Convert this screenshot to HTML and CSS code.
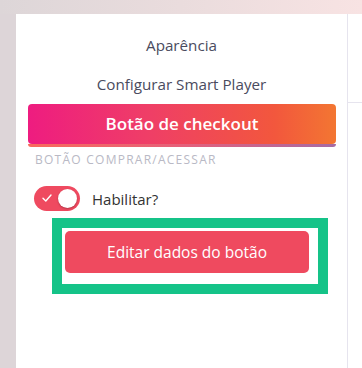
FILE: index.html
```html
<!DOCTYPE html>
<html lang="pt">
<head>
<meta charset="utf-8">
<link rel="stylesheet" href="styles.css">
</head>
<body>
<div class="top"></div>
<div class="main">
  <div class="side"></div>
  <div class="panel">
    <div class="menu-item">Aparência</div>
    <div class="menu-item">Configurar Smart Player</div>
    <div class="checkout">Botão de checkout</div>
    <div class="section-label">BOTÃO COMPRAR/ACESSAR</div>
    <div class="toggle-row">
      <div class="toggle">
        <svg class="check" width="10" height="8" viewBox="0 0 10 8"><path d="M1 4.2 L3.8 7 L9 1" fill="none" stroke="#fff" stroke-width="1.4" stroke-linecap="round" stroke-linejoin="round"/></svg>
        <span class="knob"></span>
      </div>
      <span class="toggle-label">Habilitar?</span>
    </div>
    <div class="highlight">
      <div class="edit-btn">Editar dados do botão</div>
    </div>
  </div>
  <div class="rest">
    <div class="rest-top"></div>
  </div>
</div>
</body>
</html>
```

FILE: styles.css
```css
html, body {
  margin: 0;
  padding: 0;
  height: 100%;
  background: #fff;
  font-family: "Open Sans", "Noto Sans", sans-serif;
}
.top {
  height: 14px;
  background: linear-gradient(90deg, #ddd6d8 0%, #eadcdd 50%, #f8e3e3 100%);
}
.main {
  display: flex;
  height: 354px;
}
.side {
  width: 16px;
  background: #ddd5d8;
  flex: none;
}
.panel {
  width: 331px;
  flex: none;
  background: #fff;
  border-right: 1px solid #e6e4ee;
  padding-top: 12px;
  box-sizing: content-box;
}
.menu-item {
  height: 39px;
  line-height: 39px;
  text-align: center;
  font-size: 15.2px;
  color: #4a4b5e;
}
.checkout {
  margin: 0 11px 0 12px;
  height: 40px;
  line-height: 40px;
  text-align: center;
  color: #fff;
  font-size: 17px;
  font-weight: 600;
  border-radius: 4px;
  background: linear-gradient(90deg, #ee1c80 0%, #ef3f66 40%, #f2573d 80%, #f37632 100%);
  position: relative;
}
.checkout::after {
  content: "";
  position: absolute;
  left: 0;
  right: 0;
  bottom: -3px;
  height: 3px;
  border-radius: 0 0 4px 4px;
  background: linear-gradient(90deg, #f96a5c 0%, #e5607a 50%, #a66ba4 100%);
}
.section-label {
  margin-top: 7px;
  padding-left: 19px;
  line-height: 18px;
  font-size: 12px;
  letter-spacing: 1.25px;
  color: #b9b9c5;
}
.toggle-row {
  display: flex;
  align-items: center;
  gap: 12px;
  margin-top: 17px;
  padding-left: 18px;
}
.toggle {
  width: 46px;
  height: 25px;
  border-radius: 13px;
  background: #ef4a60;
  position: relative;
  flex: none;
}
.check {
  position: absolute;
  left: 8px;
  top: 8px;
}
.knob {
  position: absolute;
  right: 3px;
  top: 3px;
  width: 19px;
  height: 19px;
  border-radius: 50%;
  background: #fff;
  box-shadow: 0 1px 2px rgba(0,0,0,0.25);
}
.toggle-label {
  font-size: 15px;
  color: #333;
}
.highlight {
  margin: 7px 0 0 36px;
  width: 244px;
  border: 10px solid #15c388;
  padding: 3px 9px 11px 3px;
  background: #fff;
}
.edit-btn {
  height: 42px;
  line-height: 42px;
  border-radius: 5px;
  background: #ef4a5f;
  color: #fff;
  text-align: center;
  font-size: 15.5px;
}
.rest {
  flex: 1;
  background: #fff;
}
.rest-top {
  height: 88px;
  border-bottom: 1px solid #e6e4ee;
}
```
